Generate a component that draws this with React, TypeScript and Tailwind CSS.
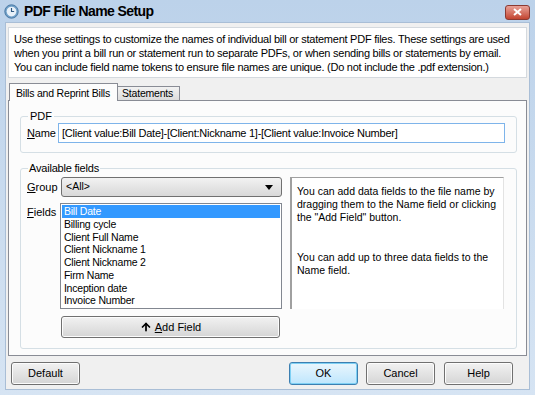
import { ArrowUp } from "lucide-react";

const font = { fontFamily: '"Liberation Sans", Arial, sans-serif' };

const fields = [
    "Bill Date",
    "Billing cycle",
    "Client Full Name",
    "Client Nickname 1",
    "Client Nickname 2",
    "Firm Name",
    "Inception date",
    "Invoice Number",
];

const DlgButton = ({ label, focused, className }: { label: string; focused?: boolean; className?: string }) => (
    <button
        className={
            "h-[23px] w-[69px] rounded-[3px] border text-[11px] text-black bg-gradient-to-b " +
            (focused
                ? "border-[#3c7fb1] from-[#eaf6fd] to-[#bee6fd] shadow-[inset_0_0_0_1px_#7ed0f4] "
                : "border-[#707070] from-[#f2f2f2] to-[#d5d5d5] shadow-[inset_0_0_0_1px_#fcfcfc] ") +
            (className ?? "")
        }
    >
        {label}
    </button>
);

export default function App() {
    return (
        <div
            style={font}
            className="w-[535px] h-[395px] flex flex-col bg-gradient-to-b from-[#bcd2ea] to-[#d6e4f3] overflow-hidden"
        >
            {/* title bar */}
            <div className="h-[22px] flex items-center pl-[4px] pr-[5px] shrink-0">
                <svg width="15" height="15" viewBox="0 0 16 16" className="mr-[5px]">
                    <circle cx="8" cy="8" r="7.2" fill="#6f9fc8" stroke="#3b6b96" strokeWidth="0.8" />
                    <circle cx="8" cy="8" r="5.2" fill="#e8f1f9" />
                    <path d="M8 4.2V8h2.8" stroke="#2f5a82" strokeWidth="1.2" fill="none" />
                </svg>
                <span className="text-[14px] font-bold text-black tracking-[-0.6px]">PDF File Name Setup</span>
                <div className="ml-auto mt-[2px] w-[25px] h-[15px] rounded-[3px] border border-[#8b3a32] bg-gradient-to-b from-[#e8a198] to-[#c2432f] flex items-center justify-center">
                    <svg width="9" height="8" viewBox="0 0 9 8">
                        <path d="M1 1l7 6M8 1L1 7" stroke="#fff" strokeWidth="2" />
                    </svg>
                </div>
            </div>

            {/* client area */}
            <div className="flex-1 mx-[5px] mb-[5px] bg-[#f0f0f0] border border-[#a9bed6] flex flex-col px-[2px] pt-[4px]">
                <div className="h-[51px] bg-white border border-[#d4d9de] px-[5px] pt-[4px] text-[11px] leading-[14px] text-black tracking-[-0.25px] whitespace-nowrap">
                    Use these settings to customize the names of individual bill or statement PDF files. These settings are used
                    <br />
                    when you print a bill run or statement run to separate PDFs, or when sending bills or statements by email.
                    <br />
                    You can include field name tokens to ensure file names are unique. (Do not include the .pdf extension.)
                </div>

                {/* tabs */}
                <div className="mt-[4px] flex items-end h-[18px] pl-[1px]">
                    <div className="relative z-10 h-[18px] w-[109px] border border-b-0 border-[#898c95] bg-[#fcfcfc] text-[10.5px] tracking-[-0.2px] pl-[6px] pt-[2px] -mb-px">
                        Bills and Reprint Bills
                    </div>
                    <div className="h-[14px] w-[62px] border border-l-0 border-[#898c95] border-b-0 bg-gradient-to-b from-[#f2f2f2] to-[#dcdcdc] text-[10.5px] tracking-[-0.2px] pl-[4px] leading-[13px]">
                        Statements
                    </div>
                </div>

                {/* tab panel */}
                <div className="h-[256px] border border-[#898c95] bg-[#fcfcfc] px-[11px] pt-[9px] flex flex-col">
                    <fieldset className="h-[43px] border border-[#d5dfe5] rounded-[3px] px-[6px] pb-0 mr-[-2px]">
                        <legend className="text-[11px] px-[2px] ml-[1px] leading-[12px]">PDF</legend>
                        <div className="flex items-center mt-[1px]">
                            <span className="text-[11px] w-[31px] tracking-[-0.2px]">
                                <span className="underline">N</span>ame
                            </span>
                            <div className="h-[20px] w-[447px] border border-[#7eb4ea] bg-white flex items-center pl-[3px] text-[11px] tracking-[-0.25px] whitespace-nowrap">
                                [Client value:Bill Date]-[Client:Nickname 1]-[Client value:Invoice Number]
                            </div>
                        </div>
                    </fieldset>

                    <fieldset className="mt-[9px] h-[187px] border border-[#d5dfe5] rounded-[3px] pl-[6px] pr-[10px] mr-[-2px]">
                        <legend className="text-[11px] px-[1px] ml-[1px] leading-[12px] tracking-[-0.2px]">Available fields</legend>
                        <div className="flex gap-[8px] mt-[3px]">
                            <div className="flex flex-col w-[255px]">
                                <div className="flex items-center">
                                    <span className="text-[11px] w-[34px]">
                                        <span className="underline">G</span>roup
                                    </span>
                                    <div className="h-[20px] w-[221px] rounded-[3px] border border-[#707070] bg-gradient-to-b from-[#f2f2f2] to-[#d8d8d8] flex items-center pl-[4px] pr-[8px] text-[10.5px]">
                                        &lt;All&gt;
                                        <svg width="8" height="5" viewBox="0 0 8 5" className="ml-auto">
                                            <path d="M0 0h8L4 5z" fill="#000" />
                                        </svg>
                                    </div>
                                </div>
                                <div className="flex mt-[6px]">
                                    <span className="text-[11px] w-[33px] pt-[1px]">
                                        <span className="underline">F</span>ields
                                    </span>
                                    <div className="h-[106px] w-[223px] border border-[#828790] bg-white p-[1px] flex flex-col">
                                        {fields.map((f, i) => (
                                            <div
                                                key={f}
                                                className={
                                                    "h-[12.75px] leading-[12.75px] pl-[2px] text-[10.5px] tracking-[-0.2px] " +
                                                    (i === 0 ? "bg-[#3399ff] text-white" : "text-black")
                                                }
                                            >
                                                {f}
                                            </div>
                                        ))}
                                    </div>
                                </div>
                                <button className="mt-[7px] ml-[34px] h-[22px] w-[219px] rounded-[3px] border border-[#707070] bg-gradient-to-b from-[#f2f2f2] to-[#d5d5d5] shadow-[inset_0_0_0_1px_#fcfcfc] flex items-center justify-center gap-[3px] text-[11px]">
                                    <ArrowUp size={12} strokeWidth={3.5} className="text-black" />
                                    <span>
                                        <span className="underline">A</span>dd Field
                                    </span>
                                </button>
                            </div>
                            <div className="h-[132px] flex-1 mr-[2px] border-l-2 border-t border-[#a0a0a0] border-r border-r-[#e3e3e3] border-b-0 bg-white px-[5px] pt-[7px] text-[10.5px] leading-[13px] tracking-[0px]">
                                <p>You can add data fields to the file name by dragging them to the Name field or clicking the "Add Field" button.</p>
                                <p className="mt-[27px]">You can add up to three data fields to the Name field.</p>
                            </div>
                        </div>
                    </fieldset>
                </div>

                {/* bottom buttons */}
                <div className="flex items-center mt-[6px] pl-[3px] pr-[14px]">
                    <DlgButton label="Default" />
                    <DlgButton label="OK" focused className="ml-auto" />
                    <DlgButton label="Cancel" className="ml-[8px]" />
                    <DlgButton label="Help" className="ml-[9px]" />
                </div>
            </div>
        </div>
    );
}
